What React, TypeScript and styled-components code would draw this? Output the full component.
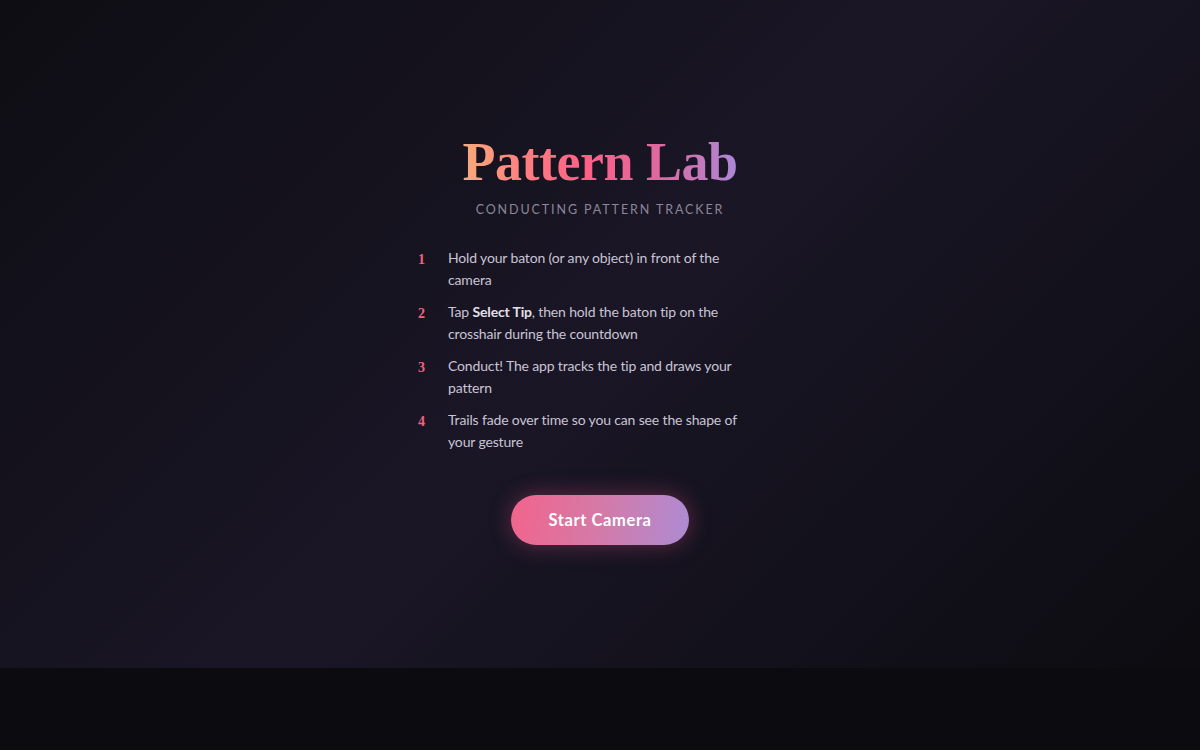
import React from 'react'
import styled, { createGlobalStyle } from 'styled-components'

const GlobalStyle = createGlobalStyle`
  html, body {
    margin: 0;
    padding: 0;
    background: #0b0b10;
  }
  body {
    font-family: Lato, "Noto Sans", sans-serif;
    -webkit-font-smoothing: antialiased;
  }
`

const Screen = styled.div`
  height: 668px;
  display: flex;
  align-items: center;
  justify-content: center;
  background: linear-gradient(135deg, #0e0d13 0%, #1a1626 50%, #0c0c11 100%);
`

const Intro = styled.div`
  display: flex;
  flex-direction: column;
  align-items: center;
  padding-top: 6px;
`

const Title = styled.h1`
  margin: 0;
  font-family: "Liberation Serif", "DejaVu Serif", serif;
  font-weight: 700;
  font-size: 54px;
  line-height: 64px;
  letter-spacing: -0.5px;
  background: linear-gradient(90deg, #f6aa7a 0%, #ff7a82 25%, #ff5f86 45%, #e0689d 70%, #ac87d6 100%);
  -webkit-background-clip: text;
  background-clip: text;
  color: transparent;
`

const Subtitle = styled.p`
  margin: 8px 0 0;
  font-size: 12.5px;
  letter-spacing: 1.9px;
  color: #8b8699;
  text-transform: uppercase;
`

// list sits a little left of centre in the reference
const Steps = styled.ol`
  list-style: none;
  margin: 30px 44px 0 0;
  padding: 0;
  width: 320px;
  display: flex;
  flex-direction: column;
  gap: 10px;
`

const Step = styled.li`
  display: grid;
  grid-template-columns: 30px 1fr;
  font-size: 14px;
  line-height: 22px;
  letter-spacing: -0.15px;
  color: #c9c4d4;

  strong {
    font-weight: 700;
    color: #e4e0ea;
  }
`

const StepNumber = styled.span`
  font-family: "Liberation Serif", "DejaVu Serif", serif;
  font-weight: 700;
  font-size: 14px;
  color: #f2607f;
  padding-top: 2px;
`

const StartButton = styled.button`
  margin-top: 42px;
  width: 178px;
  height: 50px;
  border: none;
  border-radius: 25px;
  background: linear-gradient(100deg, #f2648b 0%, #d47aa8 50%, #ad8bd4 100%);
  box-shadow: 0 0 22px rgba(240, 90, 140, 0.35);
  color: #fff;
  font-family: Lato, "Noto Sans", sans-serif;
  font-weight: 700;
  font-size: 16.5px;
  letter-spacing: 0.6px;
  cursor: pointer;
`

const steps: React.ReactNode[] = [
  'Hold your baton (or any object) in front of the camera',
  <>
    Tap <strong>Select Tip</strong>, then hold the baton tip on the crosshair during the countdown
  </>,
  'Conduct! The app tracks the tip and draws your pattern',
  'Trails fade over time so you can see the shape of your gesture',
]

export default function App() {
  return (
    <>
      <GlobalStyle />
      <Screen>
        <Intro>
          <Title>Pattern Lab</Title>
          <Subtitle>Conducting Pattern Tracker</Subtitle>
          <Steps>
            {steps.map((text, i) => (
              <Step key={i}>
                <StepNumber>{i + 1}</StepNumber>
                <span>{text}</span>
              </Step>
            ))}
          </Steps>
          <StartButton>Start Camera</StartButton>
        </Intro>
      </Screen>
    </>
  )
}
